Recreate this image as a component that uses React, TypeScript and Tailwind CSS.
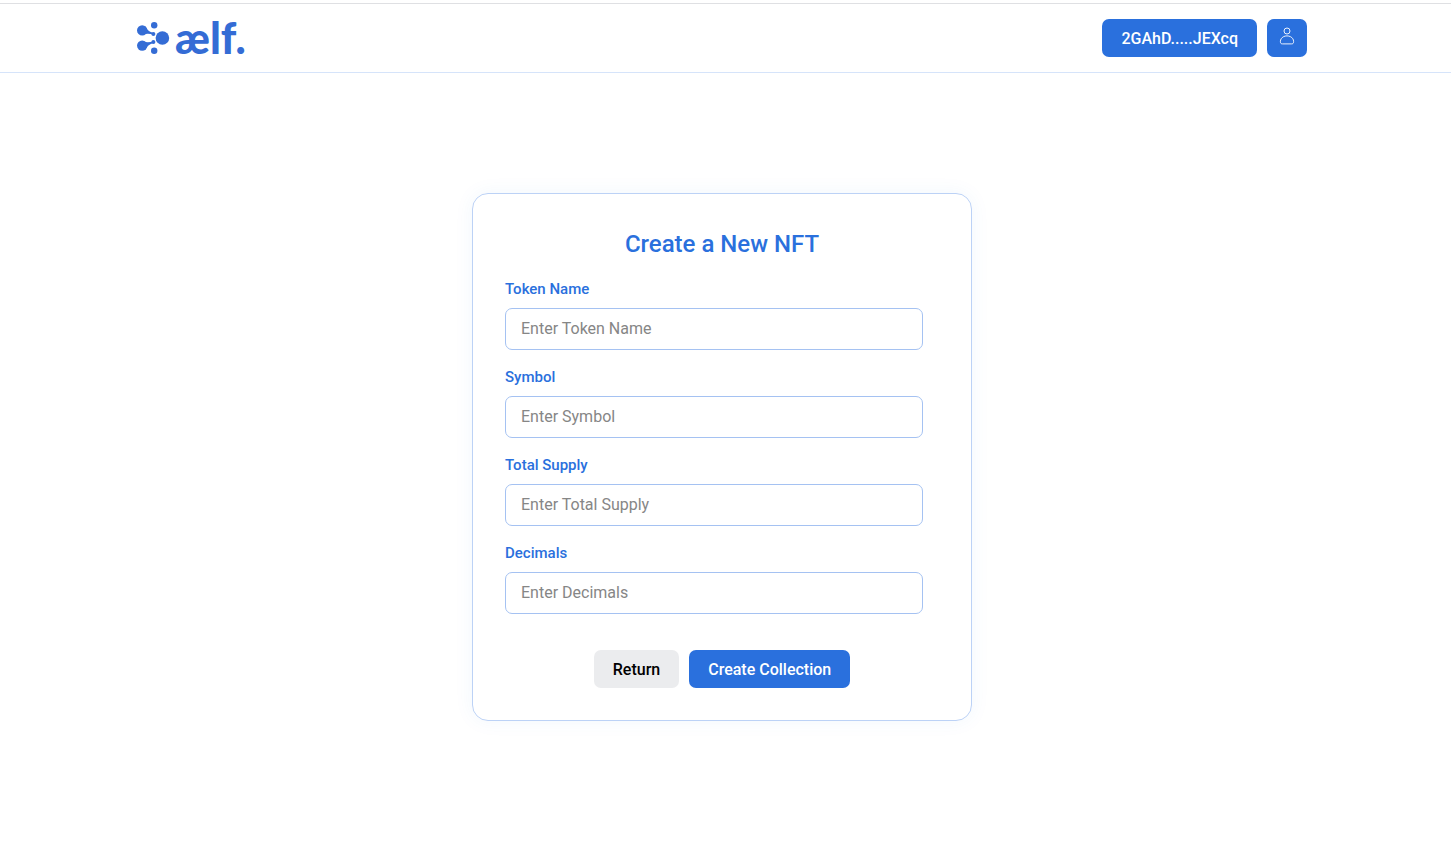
import { useId } from "react";

const fields = ["Token Name", "Symbol", "Total Supply", "Decimals"];

function Logo() {
  return (
    <a href="#" aria-label="aelf." className="flex h-8 items-center gap-1 text-[#346cd5]">
      <svg viewBox="0 0 34 34" className="h-[34px] w-[34px]" fill="currentColor" aria-hidden="true">
        <g stroke="currentColor" strokeWidth="1">
          <path d="M5 9 17 13" />
          <path d="M5 25 17 21" />
        </g>
        <path d="M8 5 Q11 11 17 12.2 L16.5 13.8 Q10 11.5 6 14Z" />
        <path d="M8 29 Q11 23 17 21.8 L16.5 20.2 Q10 22.5 6 20Z" />
        <circle cx="5.2" cy="9.4" r="5.2" />
        <circle cx="5.2" cy="24.6" r="5.2" />
        <circle cx="17.2" cy="4.2" r="3.2" />
        <circle cx="17.2" cy="29.8" r="3.2" />
        <circle cx="16.4" cy="13" r="2" />
        <circle cx="16.4" cy="21" r="2" />
        <circle cx="25.4" cy="17" r="6.8" />
      </svg>
      <span className="font-[Lato,sans-serif] text-[43px] leading-8 font-black">ælf.</span>
    </a>
  );
}

function UserIcon() {
  return (
    <svg viewBox="0 0 16 18" className="h-[18px] w-4" fill="none" stroke="currentColor" strokeWidth="0.9" aria-hidden="true">
      <circle cx="8" cy="4" r="3" />
      <path d="M4.5 9.7C2.5 10.8 1.4 12.4 1.4 14.6c0 1.6.6 2.3 2.2 2.3h8.8c1.6 0 2.2-.7 2.2-2.3 0-2.2-1.1-3.8-3.1-4.9C9.5 8.6 6.5 8.6 4.5 9.7Z" />
    </svg>
  );
}

function Field({ label }: { label: string }) {
  const id = useId();
  return (
    <div className="flex flex-col gap-2">
      <label htmlFor={id} className="text-[15px] leading-[22px] font-medium text-[#2a70dd]">
        {label}
      </label>
      <input
        id={id}
        type="text"
        placeholder={`Enter ${label}`}
        className="h-[42px] w-full rounded-[7px] border border-[#a5c2f2] px-[15px] pb-0.5 text-base text-gray-800 outline-none placeholder:text-[#868686] focus:border-[#2a70dd]"
      />
    </div>
  );
}

export default function App() {
  return (
    <div className="min-h-screen bg-white pt-[3px] font-[Roboto,sans-serif]">
      <header className="border-t border-b border-t-[#dfe0e3] border-b-[#d6e4fa] pr-[7px]">
        <div className="mx-auto flex h-[68px] max-w-[1170px] items-center justify-between">
          <Logo />
          <div className="flex gap-2.5">
            <button type="button" className="h-[38px] rounded-[7px] bg-[#2a70dd] px-[19px] pt-0.5 text-base font-medium text-white">
              2GAhD.....JEXcq
            </button>
            <button
              type="button"
              aria-label="Account"
              className="flex h-[38px] w-10 items-center justify-center rounded-[7px] bg-[#2a70dd] pb-1 text-white"
            >
              <UserIcon />
            </button>
          </div>
        </div>
      </header>
      <main className="pt-[120px] pr-[7px] pb-10">
        <form
          onSubmit={(event) => event.preventDefault()}
          className="mx-auto max-w-[500px] rounded-2xl border border-[#bcd2f6] px-8 pt-8 pb-8 shadow-[0_0_20px_rgba(42,112,221,0.06)]"
        >
          <h1 className="text-center text-2xl leading-9 font-medium text-[#2a70dd]">Create a New NFT</h1>
          <div className="mt-4 flex flex-col gap-4 pr-4">
            {fields.map((label) => (
              <Field key={label} label={label} />
            ))}
          </div>
          <div className="mt-9 flex justify-center gap-2.5">
            <button type="button" className="h-[38px] rounded-[7px] bg-[#ebecee] px-[19px] pt-0.5 text-base font-medium text-black">
              Return
            </button>
            <button type="submit" className="h-[38px] rounded-[7px] bg-[#2a70dd] px-[19px] pt-0.5 text-base font-medium text-white">
              Create Collection
            </button>
          </div>
        </form>
      </main>
    </div>
  );
}
